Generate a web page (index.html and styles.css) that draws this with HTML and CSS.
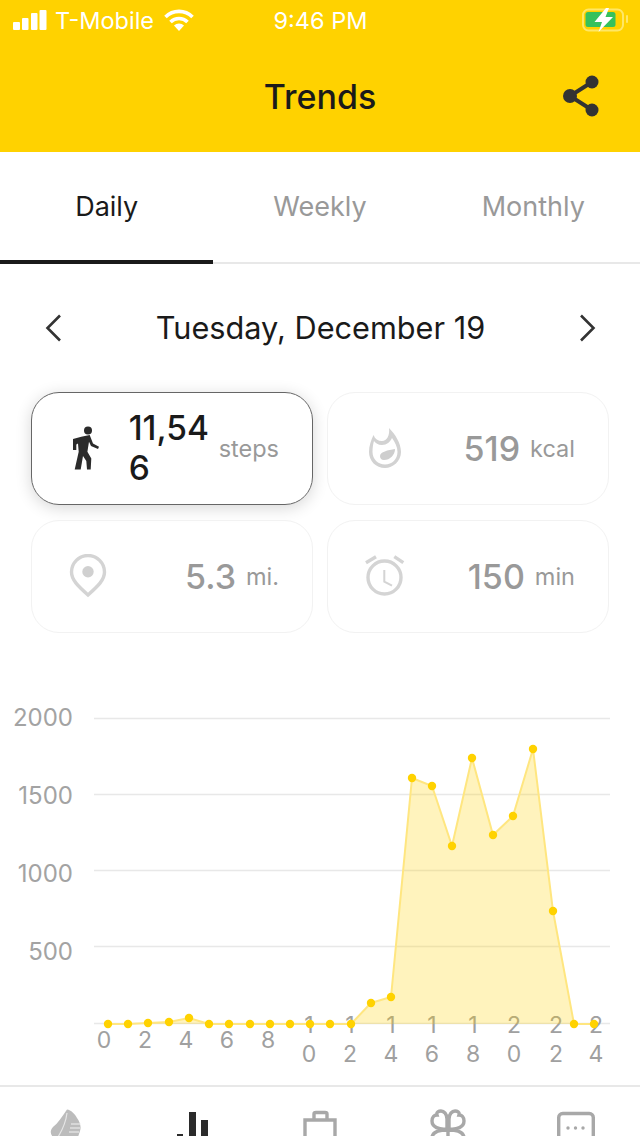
FILE: index.html
```html
<!DOCTYPE html>
<html>
<head>
  <title>Trends</title>
  <meta name="viewport" content="width=device-width, initial-scale=1.0" />
  <link rel="stylesheet" href="styles.css">
</head>
<body>

  <div class="phone">
    <div class="topbar">
      <div class="status">
        <div class="status-left">
          <svg class="signal" width="34" height="20" viewBox="0 0 34 20"><rect x="0" y="12" width="7" height="8" rx="1"/><rect x="9" y="8" width="6.5" height="12" rx="1"/><rect x="18" y="3" width="6.5" height="17" rx="1"/><rect x="26.5" y="0" width="7" height="20" rx="1"/></svg>
          <span>T-Mobile</span>
          <svg class="wifi" width="30" height="22" viewBox="0 0 30 22"><path d="M1.5 8A19 19 0 0 1 28.5 8M6.5 13A12 12 0 0 1 23.5 13" fill="none" stroke="#fff" stroke-width="3.6"/><path d="M10 16.5A7.5 7.5 0 0 1 20 16.5L15 22z" fill="#fff"/></svg>
        </div>
        <div class="status-time">9:46 PM</div>
        <div class="status-right">
          <svg width="46" height="24" viewBox="0 0 46 24"><rect x="1" y="1.5" width="40" height="21" rx="5.5" fill="none" stroke="#ffe766" stroke-width="2"/><rect x="44" y="7" width="2" height="8" rx="1" fill="#ffe766"/><rect x="3.5" y="4" width="30" height="15" rx="2.5" fill="#36c15c"/><path d="M24 0 12.5 14H20L16.5 24 31 9H23.5L27 0z" fill="#fff"/></svg>
        </div>
      </div>
      <div class="titlebar">
        <h1>Trends</h1>
        <svg class="share" width="40" height="44" viewBox="0 0 40 44"><path d="M30 8 8 22l22 14" fill="none" stroke="#333" stroke-width="4"/><circle cx="30" cy="8" r="6.5" fill="#333"/><circle cx="8" cy="22" r="7" fill="#333"/><circle cx="30" cy="36" r="6.5" fill="#333"/></svg>
      </div>
    </div>

    <div class="tabs">
      <div class="tab active">Daily</div>
      <div class="tab">Weekly</div>
      <div class="tab">Monthly</div>
    </div>

    <div class="date-row">
      <svg width="20" height="28" viewBox="0 0 20 28"><path d="M16 1.5 3.500 14 16 26.500" fill="none" stroke="#333" stroke-width="2.600"/></svg>
      <div class="date">Tuesday, December 19</div>
      <svg width="20" height="28" viewBox="0 0 20 28"><path d="M4 1.500 16.500 14 4 26.500" fill="none" stroke="#333" stroke-width="2.600"/></svg>
    </div>

    <div class="cards">
      <div class="card active">
        <svg class="card-icon walk" width="32" height="44" viewBox="0 0 32 44"><circle cx="16" cy="4.500" r="4"/><path d="M9.300 10.700 17.700 9 21 17.400 27 20.700 26 23 19 20 17 15.700 15.400 25.700 19.300 32.400 18.700 43.400H15L14.300 35 11 30 8.700 43.400H2.700L6.700 25.700 6 17.400 4.300 18.500V24H1V13z"/></svg>
        <div class="value wrap">11,546</div>
        <div class="unit">steps</div>
      </div>
      <div class="card">
        <svg class="card-icon" width="34" height="42" viewBox="0 0 34 42"><path fill-rule="evenodd" fill="#d2d2d2" d="M21 1C27 7 33 16 33 25 33 34 25 41 17 41 8 41 1 34 1 25 1 19 3 13 5.500 8 7 12 10 14 14 14 19 14 22 8 21 1zM24 11C22 15 19 18 14 18 10 18 7.500 16 6 14 5 17 4.500 21 4.500 25 4.500 32 10 37.500 17 37.500 24 37.500 29.500 32 29.500 25 29.500 20 27 15 24 11z"/><path d="M27 22C27 28 22 33 16 33 13 33 12 31 12 29 12 25 20 23 27 22z" fill="#cecece"/></svg>
        <div class="value">519</div>
        <div class="unit">kcal</div>
      </div>
      <div class="card">
        <svg class="card-icon shift" width="38" height="44" viewBox="0 0 38 44"><path d="M19 41C9 32 2.500 26 2.500 18a16.500 16.500 0 0 1 33 0c0 8-6.500 14-16.500 23z" fill="none" stroke="#d4d4d4" stroke-width="3.400"/><circle cx="19" cy="17.700" r="5.700" fill="#d0d0d0"/></svg>
        <div class="value">5.3</div>
        <div class="unit">mi.</div>
      </div>
      <div class="card">
        <svg class="card-icon shift" width="40" height="42" viewBox="0 0 40 42"><circle cx="19.500" cy="22.500" r="16.500" fill="none" stroke="#d4d4d4" stroke-width="3.400"/><path d="M19.300 15V26.700L27 30.700" fill="none" stroke="#d4d4d4" stroke-width="2"/><path d="M1 7.700 11 1.700M38.300 7.700 29.300 1.700" fill="none" stroke="#d4d4d4" stroke-width="3.400"/></svg>
        <div class="value">150</div>
        <div class="unit">min</div>
      </div>
    </div>

    <svg class="chart" width="640" height="400" viewBox="0 690 640 400">
      <g class="grid">
        <path d="M94 718.500H610M94 794.500H610M94 870.500H610M94 946.500H610M94 1023.500H610"/>
      </g>
      <g class="y-labels">
        <text x="73" y="726">2000</text>
        <text x="73" y="804">1500</text>
        <text x="73" y="882">1000</text>
        <text x="73" y="960">500</text>
      </g>
      <g class="x-labels">
        <text x="104" y="1048">0</text>
        <text x="145" y="1048">2</text>
        <text x="186" y="1048">4</text>
        <text x="227" y="1048">6</text>
        <text x="268" y="1048">8</text>
        <text x="309" y="1033">1</text><text x="309" y="1062">0</text>
        <text x="350" y="1033">1</text><text x="350" y="1062">2</text>
        <text x="391" y="1033">1</text><text x="391" y="1062">4</text>
        <text x="432" y="1033">1</text><text x="432" y="1062">6</text>
        <text x="473" y="1033">1</text><text x="473" y="1062">8</text>
        <text x="514" y="1033">2</text><text x="514" y="1062">0</text>
        <text x="556" y="1033">2</text><text x="556" y="1062">2</text>
        <text x="596" y="1033">2</text><text x="596" y="1062">4</text>
      </g>
      <polygon class="area" points="108,1024 128,1024 148,1023 169,1022 189,1018 209,1024 229,1024 250,1024 270,1024 290,1024 310,1024 330,1024 351,1024 371,1003 391,997 412,778 432,786 452,846 472,758 493,835 513,816 533,749 553,911 574,1024 594,1024"/>
      <polyline class="line" points="108,1024 128,1024 148,1023 169,1022 189,1018 209,1024 229,1024 250,1024 270,1024 290,1024 310,1024 330,1024 351,1024 371,1003 391,997 412,778 432,786 452,846 472,758 493,835 513,816 533,749 553,911 574,1024 594,1024"/>
      <g class="dots">
        <circle cx="108" cy="1024" r="4.200"/><circle cx="128" cy="1024" r="4.200"/><circle cx="148" cy="1023" r="4.200"/><circle cx="169" cy="1022" r="4.200"/><circle cx="189" cy="1018" r="4.200"/><circle cx="209" cy="1024" r="4.200"/><circle cx="229" cy="1024" r="4.200"/><circle cx="250" cy="1024" r="4.200"/><circle cx="270" cy="1024" r="4.200"/><circle cx="290" cy="1024" r="4.200"/><circle cx="310" cy="1024" r="4.200"/><circle cx="330" cy="1024" r="4.200"/><circle cx="351" cy="1024" r="4.200"/><circle cx="371" cy="1003" r="4.200"/><circle cx="391" cy="997" r="4.200"/><circle cx="412" cy="778" r="4.200"/><circle cx="432" cy="786" r="4.200"/><circle cx="452" cy="846" r="4.200"/><circle cx="472" cy="758" r="4.200"/><circle cx="493" cy="835" r="4.200"/><circle cx="513" cy="816" r="4.200"/><circle cx="533" cy="749" r="4.200"/><circle cx="553" cy="911" r="4.200"/><circle cx="574" cy="1024" r="4.200"/><circle cx="594" cy="1024" r="4.200"/>
      </g>
    </svg>

    <div class="bottom-nav">
      <svg class="nudge" width="32" height="28" viewBox="0 0 32 28"><path d="M17 .5C21 1 25 5 27 9 30 13 31.500 18 30 22L28 28H3C0 25 0 21 3 18 8 14 12 8 17 .5z" fill="#bcbcbc"/><path d="M17 4C16 12 13 20 8 28" fill="none" stroke="#e6e6e6" stroke-width="1.200"/><path d="M21 15H31M20 19H30M19 23H29" stroke="#f2f2f2" stroke-width="1.200"/></svg>
      <svg width="32" height="28" viewBox="0 0 32 28"><rect x="1" y="25" width="6" height="3" fill="#2b2b2b"/><rect x="13" y="3" width="7" height="25" fill="#2b2b2b"/><rect x="25" y="11" width="7" height="17" fill="#2b2b2b"/></svg>
      <svg width="36" height="28" viewBox="0 0 36 28"><path d="M3 28V11H33V28M12 10V5Q12 3.500 14 3.500H23Q25 3.500 25 5V10" fill="none" stroke="#a8a8a8" stroke-width="3.400"/></svg>
      <svg width="38" height="28" viewBox="0 0 38 28"><path d="M18 20C10 21 3 18 3 12 3 8 5 6 8 6 7 3 10 2 12 2 15 2 18 5 18 10V20M20 20C28 21 35 18 35 12 35 8 33 6 30 6 31 3 28 2 26 2 23 2 20 5 20 10V20M18 21C10 21 4 23 3 28M20 21C28 21 34 23 35 28M19 10V28" fill="none" stroke="#a8a8a8" stroke-width="3.400"/></svg>
      <svg width="38" height="28" viewBox="0 0 38 28"><rect x="1.700" y="4.500" width="34.600" height="40" rx="4" fill="none" stroke="#a8a8a8" stroke-width="3.400"/><circle cx="11" cy="19" r="1.700" fill="#a8a8a8"/><circle cx="18.500" cy="19" r="1.700" fill="#a8a8a8"/><circle cx="26" cy="19" r="1.700" fill="#a8a8a8"/></svg>
    </div>
  </div>

</body>
</html>
```

FILE: styles.css
```css
body {
  margin: 0;
  font-family: Inter, "Noto Sans", sans-serif;
  background-color: #fff;
  color: #1a1a1a;
}

svg {
  display: block;
}

.phone {
  width: 640px;
  height: 1136px;
  overflow: hidden;
}

.topbar {
  height: 152px;
  background-color: #ffd200;
}

.status {
  height: 40px;
  padding: 0 12px 0 13px;
  display: grid;
  grid-template-columns: 1fr auto 1fr;
  align-items: center;
  color: #fff;
  font-size: 23.5px;
}

.status-left {
  display: flex;
  align-items: center;
  gap: 8px;
}

.signal {
  fill: #fff;
}

.wifi {
  margin-left: 2px;
}

.status-right {
  display: flex;
  justify-content: flex-end;
}

.titlebar {
  height: 112px;
  position: relative;
  display: flex;
  align-items: center;
  justify-content: center;
}

.titlebar h1 {
  margin: 0;
  font-size: 34px;
  font-weight: 500;
}

.share {
  position: absolute;
  right: 38px;
  top: 34px;
}

.tabs {
  display: grid;
  grid-template-columns: repeat(3, 1fr);
  height: 112px;
  box-sizing: border-box;
  border-bottom: 2px solid #e8e8e8;
}

.tab {
  height: 112px;
  box-sizing: border-box;
  padding-top: 38px;
  text-align: center;
  font-size: 27px;
  color: #999;
}

.tab.active {
  color: #1a1a1a;
  border-bottom: 4px solid #1a1a1a;
}

.date-row {
  height: 127.5px;
  padding: 0 43px 0 44px;
  display: flex;
  align-items: center;
  justify-content: space-between;
}

.date {
  font-size: 30.7px;
}

.cards {
  margin: 0 31px;
  display: grid;
  grid-template-columns: 282px 282px;
  gap: 15px 14px;
}

.card {
  height: 113px;
  box-sizing: border-box;
  padding: 0 33px 0 40px;
  display: flex;
  align-items: center;
  border: 1px solid #f2f2f2;
  border-radius: 28px;
}

.card.active {
  border-color: #666;
  box-shadow: 0 3px 16px rgba(0, 0, 0, 0.16);
}

.card-icon {
  flex: none;
  margin-right: auto;
}

.card-icon.shift {
  margin-left: -3px;
}

.walk {
  fill: #2b2b2b;
}

.value {
  font-size: 34px;
  font-weight: 500;
  color: #999;
}

.value.wrap {
  width: 82px;
  margin-right: -2px;
  font-size: 33.5px;
  color: #1a1a1a;
  line-height: 40px;
  word-break: break-all;
}

.unit {
  margin-left: 10px;
  font-size: 23.5px;
  color: #999;
}

.chart {
  margin-top: 57.5px;
}

.grid path {
  stroke: #e8e8e8;
  stroke-width: 1.5;
  fill: none;
}

.y-labels text {
  font-size: 24px;
  fill: #a3a3a3;
  text-anchor: end;
}

.x-labels text {
  font-size: 23px;
  fill: #a0a0a0;
  text-anchor: middle;
}

.area {
  fill: rgba(255, 210, 0, 0.26);
}

.line {
  fill: none;
  stroke: #ffe680;
  stroke-width: 2;
}

.dots circle {
  fill: #ffd200;
}

.bottom-nav {
  margin-top: -5px;
  height: 51px;
  box-sizing: border-box;
  border-top: 2px solid #e8e8e8;
  padding-top: 22px;
  display: grid;
  grid-template-columns: repeat(5, 128px);
  justify-items: center;
}

.nudge {
  margin-left: 3px;
}
```
